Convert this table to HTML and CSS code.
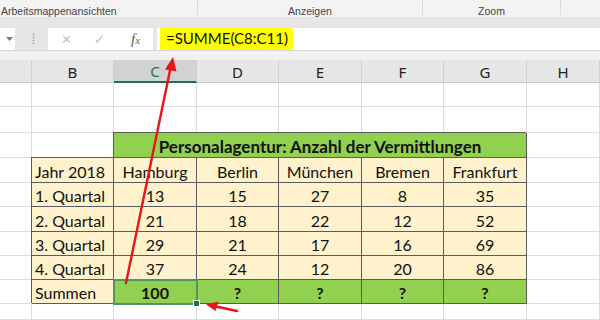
FILE: index.html
```html
<!DOCTYPE html>
<html lang="de">
<head>
  <meta charset="UTF-8">
  <title>Personalagentur</title>
  <link rel="stylesheet" href="styles.css">
</head>
<body>
<div class="window">
  <div class="ribbon">
    <div class="group group-views">Arbeitsmappenansichten</div>
    <div class="group group-show">Anzeigen</div>
    <div class="group group-zoom">Zoom</div>
    <div class="group group-rest"></div>
  </div>
  <div class="band"></div>

  <div class="formula-bar">
    <div class="name-box">
      <svg width="7" height="4" viewBox="0 0 7 4"><path d="M0 0h7L3.5 4z" fill="#777"/></svg>
    </div>
    <div class="grip"></div>
    <div class="fx-buttons">
      <span class="btn off">&#x2715;</span>
      <span class="btn off check">&#x2713;</span>
      <span class="btn fx">f<small>x</small></span>
    </div>
    <div class="formula"><span class="mark">=SUMME(C8:C11)</span></div>
  </div>
  <div class="band band-low"></div>

  <div class="sheet">
    <!-- column headers -->
    <div class="col-head"></div>
    <div class="col-head">B</div>
    <div class="col-head active">C</div>
    <div class="col-head">D</div>
    <div class="col-head">E</div>
    <div class="col-head">F</div>
    <div class="col-head">G</div>
    <div class="col-head">H</div>

    <!-- two empty rows -->
    <div class="cell"></div><div class="cell"></div><div class="cell"></div><div class="cell"></div>
    <div class="cell"></div><div class="cell"></div><div class="cell"></div><div class="cell"></div>
    <div class="cell"></div><div class="cell"></div><div class="cell"></div><div class="cell"></div>
    <div class="cell"></div><div class="cell"></div><div class="cell"></div><div class="cell"></div>

    <!-- title -->
    <div class="cell"></div><div class="cell"></div>
    <div class="cell t title">Personalagentur: Anzahl der Vermittlungen</div>
    <div class="cell"></div>

    <div class="cell"></div>
    <div class="cell t head left">Jahr 2018</div>
    <div class="cell t head">Hamburg</div>
    <div class="cell t head">Berlin</div>
    <div class="cell t head">München</div>
    <div class="cell t head">Bremen</div>
    <div class="cell t head">Frankfurt</div>
    <div class="cell"></div>

    <div class="cell"></div>
    <div class="cell t left">1. Quartal</div>
    <div class="cell t">13</div><div class="cell t">15</div><div class="cell t">27</div><div class="cell t">8</div><div class="cell t">35</div>
    <div class="cell"></div>

    <div class="cell"></div>
    <div class="cell t left">2. Quartal</div>
    <div class="cell t">21</div><div class="cell t">18</div><div class="cell t">22</div><div class="cell t">12</div><div class="cell t">52</div>
    <div class="cell"></div>

    <div class="cell"></div>
    <div class="cell t left">3. Quartal</div>
    <div class="cell t">29</div><div class="cell t">21</div><div class="cell t">17</div><div class="cell t">16</div><div class="cell t">69</div>
    <div class="cell"></div>

    <div class="cell"></div>
    <div class="cell t left">4. Quartal</div>
    <div class="cell t">37</div><div class="cell t">24</div><div class="cell t">12</div><div class="cell t">20</div><div class="cell t">86</div>
    <div class="cell"></div>

    <div class="cell"></div>
    <div class="cell t left">Summen</div>
    <div class="cell t sum selected">100</div>
    <div class="cell t sum">?</div><div class="cell t sum">?</div><div class="cell t sum">?</div><div class="cell t sum">?</div>
    <div class="cell"></div>

    <div class="cell"></div><div class="cell"></div><div class="cell"></div><div class="cell"></div>
    <div class="cell"></div><div class="cell"></div><div class="cell"></div><div class="cell"></div>
  </div>

  <!-- red pointers drawn over the sheet -->
  <svg class="arrows" width="600" height="320" viewBox="0 0 600 320">
    <g stroke="#e4161b" stroke-width="2.4" stroke-linecap="round" fill="none">
      <path d="M126 283L170.5 68"/>
      <path d="M237 311L216 306.5"/>
    </g>
    <g fill="#e4161b">
      <path d="M173 57L176.5 71.5L165 69.5z"/>
      <path d="M206 304.5L218.5 301.5L215.5 311z"/>
    </g>
  </svg>
</div>
</body>
</html>
```

FILE: styles.css
```css
* {
  box-sizing: border-box;
}

body {
  margin: 0;
  background: #fff;
}

.window {
  position: relative;
  width: 600px;
  height: 320px;
  overflow: hidden;
}

/* ribbon group captions */
.ribbon {
  display: flex;
  height: 17px;
  background: #f3f3f3;
  font-family: "Liberation Sans", sans-serif;
  font-size: 10.5px;
  color: #444;
}

.group {
  height: 15px;
  line-height: 22px;
  text-align: center;
  border-right: 1px solid #dadada;
  white-space: nowrap;
}

.group-views {
  width: 198px;
  text-align: left;
  padding-left: 1px;
}

.group-show {
  width: 225px;
}

.group-zoom {
  width: 138px;
}

.group-rest {
  flex: 1;
  border-right: none;
}

.band {
  height: 11px;
  background: #e6e6e6;
}

.band-low {
  height: 10px;
  background: #f1f1f1;
  border-top: 1px solid #d4d4d4;
}

/* name box + formula input */
.formula-bar {
  display: flex;
  height: 22px;
  background: #e6e6e6;
}

.name-box {
  width: 15px;
  background: #fff;
  display: flex;
  align-items: center;
  justify-content: center;
  padding-left: 4px;
}

.grip {
  width: 33px;
  background-image: radial-gradient(circle, #a9a9a9 0.8px, transparent 1.2px);
  background-size: 3px 3px;
  background-repeat: repeat-y;
  background-position: 17px 5px;
  background-clip: content-box;
  padding: 5px 0 6px;
}

.fx-buttons {
  width: 105px;
  background: #fff;
  display: flex;
  align-items: center;
}

.btn {
  width: 33px;
  text-align: center;
  font-family: "DejaVu Sans", sans-serif;
  font-size: 14px;
}

.btn.off {
  color: #c3c3c3;
}

.btn.off:first-child {
  margin-left: 2px;
  font-size: 13px;
}

.btn.fx {
  margin-left: 3px;
  font-family: "Liberation Serif", serif;
  font-style: italic;
  font-size: 15px;
  color: #5f5f5f;
}

.btn.fx small {
  font-size: 11px;
}

.formula {
  flex: 1;
  margin-left: 4px;
  background: #fff;
  padding: 0 3px;
  display: flex;
}

.mark {
  background: #ffff00;
  padding: 0 5px 0 6px;
  border-radius: 2px;
  font-family: Lato, "Liberation Sans", sans-serif;
  font-size: 15px;
  line-height: 21px;
  color: #111;
}

/* worksheet grid */
.sheet {
  display: grid;
  grid-template-columns: 32px 82px 83px 82px 83px 82px 83px 73px;
  grid-template-rows: 23px 24px 26px 25px 25px 24px 25px 24px 24px 24px 16px;
  font-family: Lato, "Liberation Sans", sans-serif;
  font-size: 16px;
  color: #111;
}

.col-head {
  background: #e6e6e6;
  border-bottom: 1px solid #c9c9c9;
  border-right: 1px solid #cfcfcf;
  display: flex;
  align-items: center;
  justify-content: center;
  font-family: "Noto Sans", sans-serif;
  font-size: 15px;
  color: #222;
  padding-top: 1px;
}

.col-head.active {
  background: #d2d2d2;
  border-bottom: 2px solid #217346;
  color: #217346;
}

.cell {
  border-right: 1px solid #dcdcdc;
  border-bottom: 1px solid #dcdcdc;
}

/* the framed table */
.cell.t {
  background: #fff2cc;
  border-color: #5b5b5b;
  box-shadow: -1px -1px 0 #5b5b5b;
  display: flex;
  align-items: center;
  justify-content: center;
  padding-top: 2px;
}

.cell.t.left {
  justify-content: flex-start;
  padding-left: 3px;
}

.cell.title {
  grid-column: span 5;
  background: #92d050;
  font-weight: bold;
  font-size: 17px;
}

.cell.sum {
  background: #92d050;
  font-weight: bold;
}

.cell.selected {
  position: relative;
  outline: 2px solid #4e9466;
  outline-offset: -1px;
}

/* fill handle */
.cell.selected::after {
  content: "";
  position: absolute;
  right: -4px;
  bottom: -4px;
  width: 5px;
  height: 5px;
  background: #217346;
  border: 1px solid #fff;
  z-index: 2;
}

.arrows {
  position: absolute;
  left: 0;
  top: 0;
  pointer-events: none;
}
```
